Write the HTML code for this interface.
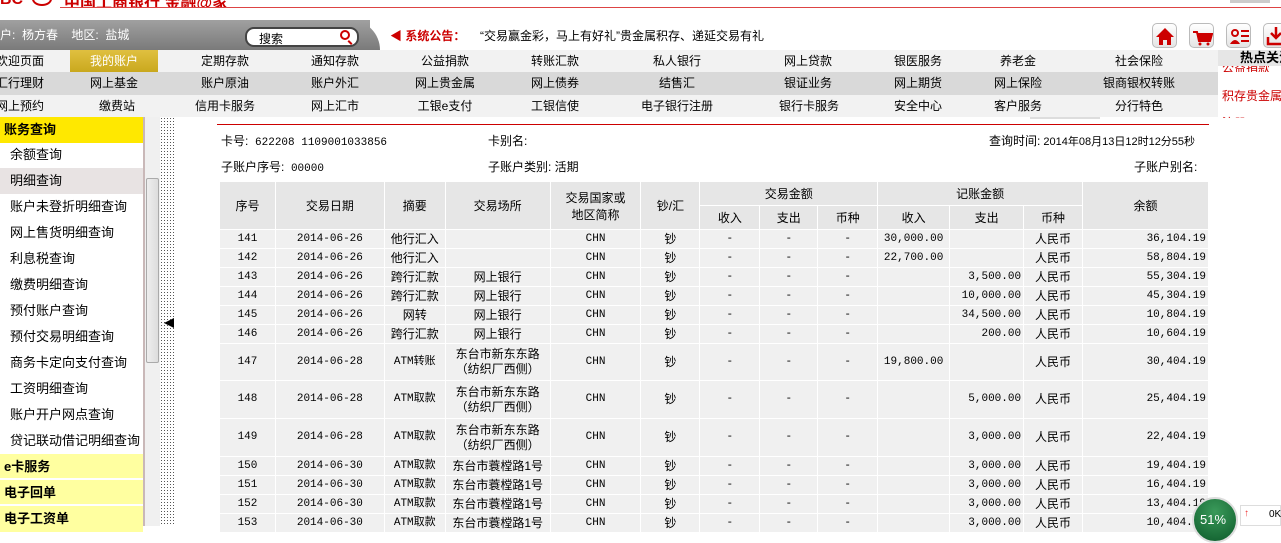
<!DOCTYPE html>
<html><head><meta charset="utf-8"><style>
*{margin:0;padding:0;box-sizing:border-box}
body{width:1281px;height:526px;overflow:hidden;background:#fff;font-family:"Liberation Sans","Noto Sans CJK SC",sans-serif;font-size:12px;color:#000;position:relative}
.a{position:absolute}
.nav{position:absolute;left:0;width:1218px;height:22px}
.nav div{position:absolute;top:0;line-height:22px;font-size:12px;transform:translateX(-50%);white-space:nowrap}
table{border-collapse:collapse;position:absolute;left:219px;top:181px;width:990px;font-size:12px}
td,th{border:1px solid #fff;text-align:center;font-weight:normal}
th{background:#e6e6e6;height:24px}
td{background:#f0f0f0;height:19px;line-height:15px;font-family:"Liberation Mono","Noto Sans CJK SC",monospace;font-size:11px}
td.c{font-family:"Liberation Sans","Noto Sans CJK SC",sans-serif;font-size:12px}
td.r{text-align:right;padding-right:2px}
.side div{position:absolute;left:0;width:143px;height:26px;line-height:26px;font-size:13px}
.ico{position:absolute;top:23px;width:25px;height:25px;border-radius:5px;background:linear-gradient(#fff,#e4e4e4);border:1px solid #bbb;overflow:hidden}
</style></head><body>
<!-- top logo strip -->
<div class="a" style="left:0;top:0;width:1281px;height:8px;overflow:hidden">
<div class="a" style="left:0;top:-9px;font-size:16px;font-weight:bold;color:#c00">BC</div>
<div class="a" style="left:32px;top:-8px;width:20px;height:14px;border:2px solid #c00;border-radius:50%"></div>
<div class="a" style="left:64px;top:-11px;font-size:16px;font-weight:bold;color:#c00">中国工商银行 金融@家</div>
</div>
<div class="a" style="left:60px;top:7px;width:1221px;height:1px;background:#d44"></div>
<div class="a" style="left:1230px;top:0;width:40px;height:3px;background:#ccc"></div>
<!-- gray bar -->
<div class="a" style="left:0;top:20px;width:370px;height:30px;background:linear-gradient(#a0a0a0,#7a7a7a)"></div>
<div class="a" style="left:340px;top:20px;width:40px;height:30px;background:linear-gradient(#a0a0a0,#7a7a7a);border-top-right-radius:30px 30px"></div>
<div class="a" style="left:0;top:27px;color:#fff;font-size:12px;line-height:16px">户:&nbsp;&nbsp;杨方春&nbsp;&nbsp;&nbsp;&nbsp;地区:&nbsp;&nbsp;盐城</div>
<div class="a" style="left:245px;top:27px;width:114px;height:20px;background:#fff;border:2px solid #444;border-radius:9px"></div>
<div class="a" style="left:259px;top:30px;font-size:12px">搜索</div>
<div class="a" style="left:340px;top:30px;width:10px;height:10px;border:2px solid #c00;border-radius:50%"></div>
<div class="a" style="left:349px;top:40px;width:2px;height:5px;background:#c00;transform:rotate(-45deg)"></div>
<div class="a" style="left:390px;top:27px;color:#c00;font-weight:bold;font-size:12px">◀ 系统公告：</div>
<div class="a" style="left:480px;top:27px;font-size:12px">“交易赢金彩，马上有好礼”贵金属积存、递延交易有礼</div>
<div class="ico" style="left:1152px"><svg width="25" height="25"><path d="M12 4 L3 13 H6 V21 H10 V16 H14 V21 H18 V13 H21 Z" fill="#c00"/></svg></div>
<div class="ico" style="left:1189px"><svg width="25" height="25"><path d="M3 8 H7 L9 17 H20 L22 10 H8" fill="#c00" stroke="#c00" stroke-width="2"/><circle cx="10" cy="20" r="1.5" fill="#c00"/><circle cx="18" cy="20" r="1.5" fill="#c00"/></svg></div>
<div class="ico" style="left:1226px"><svg width="25" height="25"><circle cx="8" cy="9" r="3" fill="none" stroke="#c00" stroke-width="2"/><path d="M3 20 Q8 12 13 20 Z" fill="#c00"/><path d="M14 7 H22 M14 12 H22 M14 17 H22" stroke="#c00" stroke-width="2"/></svg></div>
<div class="ico" style="left:1263px"><svg width="25" height="25"><path d="M12 3 V14 M7 9 L12 14 L17 9 M4 13 V20 H20 V13" fill="none" stroke="#c00" stroke-width="2.5"/></svg></div>
<!-- nav rows -->
<div class="nav" style="top:50px;background:#f2f2f2">
<div style="left:20px">欢迎页面</div>
<div style="left:70px;transform:none;background:linear-gradient(#e0c040,#c9a81e);color:#fff;width:88px;text-align:center;height:22px">我的账户</div>
<div style="left:225px">定期存款</div><div style="left:335px">通知存款</div><div style="left:445px">公益捐款</div><div style="left:555px">转账汇款</div><div style="left:677px">私人银行</div><div style="left:808px">网上贷款</div><div style="left:918px">银医服务</div><div style="left:1018px">养老金</div><div style="left:1139px">社会保险</div>
</div>
<div class="nav" style="top:72px;background:#d9d9d9;height:23px">
<div style="left:20px">汇行理财</div><div style="left:114px">网上基金</div><div style="left:225px">账户原油</div><div style="left:335px">账户外汇</div><div style="left:445px">网上贵金属</div><div style="left:555px">网上债券</div><div style="left:677px">结售汇</div><div style="left:808px">银证业务</div><div style="left:918px">网上期货</div><div style="left:1018px">网上保险</div><div style="left:1139px">银商银权转账</div>
</div>
<div class="nav" style="top:95px;background:#f2f2f2">
<div style="left:20px">网上预约</div><div style="left:117px">缴费站</div><div style="left:225px">信用卡服务</div><div style="left:335px">网上汇市</div><div style="left:445px">工银e支付</div><div style="left:555px">工银信使</div><div style="left:677px">电子银行注册</div><div style="left:809px">银行卡服务</div><div style="left:918px">安全中心</div><div style="left:1018px">客户服务</div><div style="left:1139px">分行特色</div>
</div>
<div class="a" style="left:1030px;top:117px;width:70px;height:2px;background:#ddd"></div>
<!-- right panel -->
<div class="a" style="left:1218px;top:50px;width:63px;height:16px;background:#e6e6e6;font-weight:bold;font-size:13px;padding-left:22px;line-height:16px;white-space:nowrap;overflow:hidden">热点关注</div>
<div class="a" style="left:1222px;top:66px;color:#c00;font-size:12px;height:6px;overflow:hidden;line-height:4px;white-space:nowrap">公益捐款</div>
<div class="a" style="left:1222px;top:87px;color:#c00;font-size:12px;white-space:nowrap">积存贵金属</div>
<div class="a" style="left:1222px;top:113px;color:#c00;font-size:12px;height:5px;overflow:hidden;line-height:20px">注册</div>
<!-- sidebar -->
<div class="side">
<div style="top:117px;background:#ffe800;font-weight:bold;padding-left:4px">账务查询</div>
<div style="top:142px;padding-left:10px">余额查询</div>
<div style="top:168px;padding-left:10px;background:#e8e3e3">明细查询</div>
<div style="top:194px;padding-left:10px">账户未登折明细查询</div>
<div style="top:220px;padding-left:10px">网上售货明细查询</div>
<div style="top:246px;padding-left:10px">利息税查询</div>
<div style="top:272px;padding-left:10px">缴费明细查询</div>
<div style="top:298px;padding-left:10px">预付账户查询</div>
<div style="top:324px;padding-left:10px">预付交易明细查询</div>
<div style="top:350px;padding-left:10px">商务卡定向支付查询</div>
<div style="top:376px;padding-left:10px">工资明细查询</div>
<div style="top:402px;padding-left:10px">账户开户网点查询</div>
<div style="top:428px;padding-left:10px">贷记联动借记明细查询</div>
<div style="top:454px;background:#ffffa0;font-weight:bold;padding-left:4px;height:25px;border-bottom:1px solid #fff">e卡服务</div>
<div style="top:480px;background:#ffffa0;font-weight:bold;padding-left:4px;height:25px;border-bottom:1px solid #fff">电子回单</div>
<div style="top:506px;background:#ffffa0;font-weight:bold;padding-left:4px">电子工资单</div>
</div>
<div class="a" style="left:143px;top:117px;width:2px;height:409px;background:#c9b8b8"></div>
<div class="a" style="left:145px;top:117px;width:15px;height:409px;background:#f0f0f0"></div>
<div class="a" style="left:146px;top:178px;width:13px;height:185px;background:linear-gradient(90deg,#eee,#ddd);border:1px solid #aaa;border-radius:2px"></div>
<div class="a" style="left:160px;top:117px;width:16px;height:409px;background-image:radial-gradient(#555 0.6px,transparent 0.7px);background-size:3px 3px"></div>
<div class="a" style="left:164px;top:318px;width:0;height:0;border-top:5px solid transparent;border-bottom:5px solid transparent;border-right:10px solid #000"></div>
<!-- content -->
<div class="a" style="left:217px;top:124px;width:992px;height:1px;background:#c00"></div>
<div class="a" style="left:221px;top:132px;font-size:12px">卡号:&nbsp;&nbsp;<span style="font-family:'Liberation Mono',monospace;font-size:11px">622208 1109001033856</span></div>
<div class="a" style="left:488px;top:132px">卡别名:</div>
<div class="a" style="left:989px;top:132px">查询时间:<span style="font-size:11px"> 2014年08月13日12时12分55秒</span></div>
<div class="a" style="left:221px;top:158px">子账户序号:<span style="font-family:'Liberation Mono',monospace;font-size:11px"> 00000</span></div>
<div class="a" style="left:488px;top:158px">子账户类别: 活期</div>
<div class="a" style="left:1134px;top:158px">子账户别名:</div>
<table>
<colgroup><col style="width:56px"><col style="width:109px"><col style="width:61px"><col style="width:105px"><col style="width:91px"><col style="width:59px"><col style="width:60px"><col style="width:58px"><col style="width:60px"><col style="width:72px"><col style="width:74px"><col style="width:59px"><col style="width:126px"></colgroup>
<tr><th rowspan="2">序号</th><th rowspan="2">交易日期</th><th rowspan="2">摘要</th><th rowspan="2">交易场所</th><th rowspan="2">交易国家或<br>地区简称</th><th rowspan="2">钞/汇</th><th colspan="3">交易金额</th><th colspan="3">记账金额</th><th rowspan="2">余额</th></tr>
<tr><th>收入</th><th>支出</th><th>币种</th><th>收入</th><th>支出</th><th>币种</th></tr>
<tr><td>141</td><td>2014-06-26</td><td class="c">他行汇入</td><td></td><td>CHN</td><td class="c">钞</td><td>-</td><td>-</td><td>-</td><td>30,000.00</td><td></td><td class="c">人民币</td><td class="r">36,104.19</td></tr>
<tr><td>142</td><td>2014-06-26</td><td class="c">他行汇入</td><td></td><td>CHN</td><td class="c">钞</td><td>-</td><td>-</td><td>-</td><td>22,700.00</td><td></td><td class="c">人民币</td><td class="r">58,804.19</td></tr>
<tr><td>143</td><td>2014-06-26</td><td class="c">跨行汇款</td><td class="c">网上银行</td><td>CHN</td><td class="c">钞</td><td>-</td><td>-</td><td>-</td><td></td><td class="r">3,500.00</td><td class="c">人民币</td><td class="r">55,304.19</td></tr>
<tr><td>144</td><td>2014-06-26</td><td class="c">跨行汇款</td><td class="c">网上银行</td><td>CHN</td><td class="c">钞</td><td>-</td><td>-</td><td>-</td><td></td><td class="r">10,000.00</td><td class="c">人民币</td><td class="r">45,304.19</td></tr>
<tr><td>145</td><td>2014-06-26</td><td class="c">网转</td><td class="c">网上银行</td><td>CHN</td><td class="c">钞</td><td>-</td><td>-</td><td>-</td><td></td><td class="r">34,500.00</td><td class="c">人民币</td><td class="r">10,804.19</td></tr>
<tr><td>146</td><td>2014-06-26</td><td class="c">跨行汇款</td><td class="c">网上银行</td><td>CHN</td><td class="c">钞</td><td>-</td><td>-</td><td>-</td><td></td><td class="r">200.00</td><td class="c">人民币</td><td class="r">10,604.19</td></tr>
<tr style="height:37px"><td>147</td><td>2014-06-28</td><td>ATM转账</td><td class="c">东台市新东东路<br>（纺织厂西侧）</td><td>CHN</td><td class="c">钞</td><td>-</td><td>-</td><td>-</td><td>19,800.00</td><td></td><td class="c">人民币</td><td class="r">30,404.19</td></tr>
<tr style="height:38px"><td>148</td><td>2014-06-28</td><td>ATM取款</td><td class="c">东台市新东东路<br>（纺织厂西侧）</td><td>CHN</td><td class="c">钞</td><td>-</td><td>-</td><td>-</td><td></td><td class="r">5,000.00</td><td class="c">人民币</td><td class="r">25,404.19</td></tr>
<tr style="height:38px"><td>149</td><td>2014-06-28</td><td>ATM取款</td><td class="c">东台市新东东路<br>（纺织厂西侧）</td><td>CHN</td><td class="c">钞</td><td>-</td><td>-</td><td>-</td><td></td><td class="r">3,000.00</td><td class="c">人民币</td><td class="r">22,404.19</td></tr>
<tr><td>150</td><td>2014-06-30</td><td>ATM取款</td><td class="c">东台市蓑樘路1号</td><td>CHN</td><td class="c">钞</td><td>-</td><td>-</td><td>-</td><td></td><td class="r">3,000.00</td><td class="c">人民币</td><td class="r">19,404.19</td></tr>
<tr><td>151</td><td>2014-06-30</td><td>ATM取款</td><td class="c">东台市蓑樘路1号</td><td>CHN</td><td class="c">钞</td><td>-</td><td>-</td><td>-</td><td></td><td class="r">3,000.00</td><td class="c">人民币</td><td class="r">16,404.19</td></tr>
<tr><td>152</td><td>2014-06-30</td><td>ATM取款</td><td class="c">东台市蓑樘路1号</td><td>CHN</td><td class="c">钞</td><td>-</td><td>-</td><td>-</td><td></td><td class="r">3,000.00</td><td class="c">人民币</td><td class="r">13,404.19</td></tr>
<tr><td>153</td><td>2014-06-30</td><td>ATM取款</td><td class="c">东台市蓑樘路1号</td><td>CHN</td><td class="c">钞</td><td>-</td><td>-</td><td>-</td><td></td><td class="r">3,000.00</td><td class="c">人民币</td><td class="r">10,404.19</td></tr>
</table>
<!-- floating widget -->
<div class="a" style="left:1192px;top:497px;width:46px;height:46px;border-radius:50%;background:radial-gradient(circle at 50% 30%,#3a9a5a,#0d5a2a);border:2px solid #ddd"></div>
<div class="a" style="left:1200px;top:512px;color:#fff;font-size:13px">51%</div>
<div class="a" style="left:1240px;top:505px;width:41px;height:21px;background:#fff;border:1px solid #ddd"></div>
<div class="a" style="left:1244px;top:508px;color:#e33;font-size:10px;font-weight:bold">↑</div>
<div class="a" style="left:1269px;top:509px;font-size:10px">0K</div>
</body></html>
